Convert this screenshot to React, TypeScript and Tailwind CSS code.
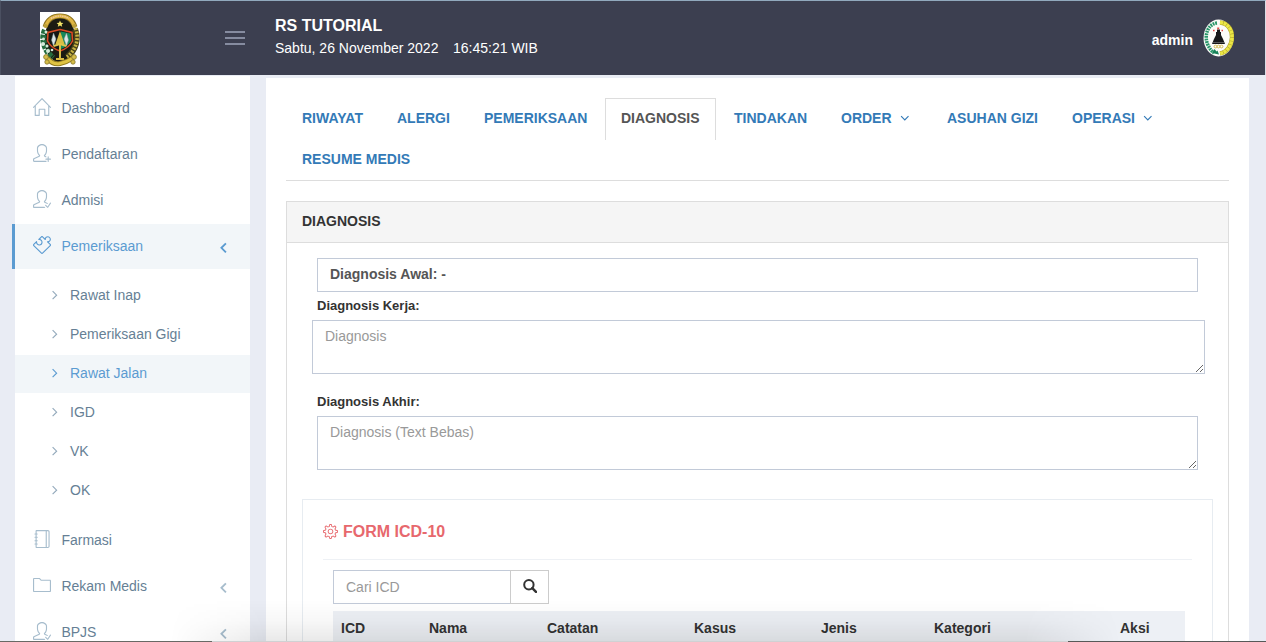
import React from "react";
import { SlHome, SlUserFollow, SlUserFollowing, SlPuzzle, SlNotebook, SlFolder, SlSettings } from "react-icons/sl";

type IconType = React.ComponentType<{ className?: string }>;

function Angle({ dir, className }: { dir: "left" | "right" | "down"; className: string }) {
  const d = {
    left: "M6.3 1.2 2.2 5.3l4.1 4.1",
    right: "M1.6 1.2 5.6 5.2 1.6 9.2",
    down: "M1.1 2.2 4.8 5.9 8.5 2.2",
  }[dir];
  return (
    <svg className={className} viewBox="0 0 10 10" fill="none" stroke="currentColor" strokeWidth={dir === "left" ? 1.7 : 1.15}>
      <path d={d} />
    </svg>
  );
}

function Crest() {
  return (
    <svg viewBox="0 0 40 55" className="h-[55px] w-10 bg-white">
      <ellipse cx="20" cy="27.500" rx="15.500" ry="23" fill="#1b1b13" />
      <path d="M5 15C8 6 14 4 20 4S32 6 35 15" fill="none" stroke="#8d7320" strokeWidth="5" />
      <path d="M5.500 14C9 5.500 14 4 20 4S31 5.500 34.500 14" fill="none" stroke="#dfb643" strokeWidth="3.400" />
      <path d="M11 6.500Q20 1.500 29 6.500" fill="none" stroke="#efc9a0" strokeWidth="1.500" strokeDasharray="1.500 .8" />
      <circle cx="5.500" cy="14" r="2" fill="#bda03a" /><circle cx="34.500" cy="14" r="2" fill="#bda03a" />
      <path d="M5 18C1 27 4 38 13 46" fill="none" stroke="#236b3e" strokeWidth="6" strokeDasharray="4 1" />
      <g fill="#d5eadb">
        <circle cx="6" cy="20" r="1.500" /><circle cx="3.500" cy="27" r="1.400" /><circle cx="3" cy="32" r="2" />
        <circle cx="7" cy="34" r="1.500" /><circle cx="8" cy="39" r="2" /><circle cx="12" cy="38" r="1.300" />
      </g>
      <path d="M35 17C39 27 36 38 27 45" fill="none" stroke="#44401a" strokeWidth="6" />
      <path d="M35.500 16C39.500 27 36 38 27 45" fill="none" stroke="#c8b343" strokeWidth="3.600" strokeDasharray="2 1.400" />
      <path d="M20 17.500 32 20.500 32.500 29Q29 36 20 39 11 36 7.500 29L8 20.500Z" fill="#141713" stroke="#d84c25" strokeWidth="1.600" />
      <path d="M21 19.500 30.500 21.500 31 29Q27 35 21 37Z" fill="#16885a" />
      <path d="m13.500 21-2 7 2 6 2.500-7Zm13 0 2 7-2 6-2.500-7Z" fill="#dbe6e7" stroke="#809499" strokeWidth=".5" />
      <path d="M20 19 24.500 32H21v14h3v2h-8v-2h3V32h-3.500Z" fill="#d9bd43" />
      <path d="m13.500 34 6.500-2 6.500 2" fill="none" stroke="#dfc54c" strokeWidth="2" />
      <path d="m20 8.500 1 2.200 2.400.2-1.800 1.600.6 2.300-2.200-1.300-2.200 1.300.6-2.300-1.800-1.600 2.400-.2Z" fill="#f5e66a" />
      <path d="M7 46Q13 53 20 51.500T33 46" fill="none" stroke="#927b20" strokeWidth="5" />
      <path d="M7 46Q13 53 20 51.500T33 46" fill="none" stroke="#dfc343" strokeWidth="3" />
      <g fill="#d5bd48" stroke="#84752d" strokeWidth=".8">
        <circle cx="6" cy="45" r="2.400" /><circle cx="34" cy="45" r="2.400" /><circle cx="7" cy="50" r="2.200" /><circle cx="33" cy="50" r="2.200" />
      </g>
    </svg>
  );
}

function Avatar() {
  return (
    <svg viewBox="0 0 31 38" className="h-[38px] w-[31px]">
      <ellipse cx="15.500" cy="19" rx="15" ry="18.500" fill="#fbfcf8" />
      <path d="M14 4C5 5 1 16 4.500 25Q7 31 11 34" fill="none" stroke="#28966a" strokeWidth="3.500" strokeDasharray="1.800 .8" />
      <path d="M17 3.500C34 5 32 32 17 34.500" fill="none" stroke="#afa32e" strokeWidth="4.400" />
      <path d="M17 3.500C34 5 32 32 17 34.500" fill="none" stroke="#ece745" strokeWidth="3.600" strokeDasharray="3 .6" />
      <path d="M13 13h5v3l2 4 2 5H9l2-5 2-4Z" fill="#171819" />
      <path d="M14 10.500h3V14h-3Z" fill="#171819" />
      <path d="M9.500 23.500h12" stroke="#858585" strokeWidth=".6" />
      <path d="M10 11.500h1.600m2.600-2.200h2m2.300 2.200H20" stroke="#e24b48" strokeWidth="1.700" />
      <g fill="none" stroke="#d7bd55" strokeWidth="1"><circle cx="12.500" cy="27.500" r="1.400" /><circle cx="15.500" cy="27.500" r="1.400" /><circle cx="18.500" cy="27.500" r="1.400" /></g>
      <path d="m9 34 2.500-4 2 2.500 1-1 1.500 4Z" fill="#18835a" />
    </svg>
  );
}

function MenuItem({ icon: Icon, label, active, arrow }: { icon: IconType; label: string; active?: boolean; arrow?: boolean }) {
  return (
    <li className={active ? "mb-px -ml-[3px] flex h-[45px] items-center border-l-[3px] border-[#5b9bd1] bg-[#f2f6f9] pb-[2px] text-[#5b9bd1]" : "mb-px flex h-[45px] items-center pb-[2px] text-[#667f95]"}>
      <Icon className={active ? "mb-px ml-[18px] size-[18px] text-[#5b9bd1]" : "mb-px ml-[18px] size-[18px] text-[#a7bdcd]"} />
      <span className="ml-[10.400px] pt-px text-[14px] leading-5">{label}</span>
      {arrow && <Angle dir="left" className={active ? "mt-[3px] mr-5 ml-auto size-[11px] text-[#5b9bd1]" : "mt-[3px] mr-5 ml-auto size-[11px] text-[#a7bdcd]"} />}
    </li>
  );
}

const subItems = [
  { label: "Rawat Inap" },
  { label: "Pemeriksaan Gigi" },
  { label: "Rawat Jalan", active: true },
  { label: "IGD" },
  { label: "VK" },
  { label: "OK" },
];

const tabs = [
  { label: "RIWAYAT", box: "w-[93px]" },
  { label: "ALERGI", box: "w-[85px]" },
  { label: "PEMERIKSAAN", box: "w-[135px]" },
  { label: "DIAGNOSIS", box: "w-[111px]", active: true },
  { label: "TINDAKAN", box: "w-[105px]" },
  { label: "ORDER", box: "w-[104px]", down: true },
  { label: "ASUHAN GIZI", box: "w-[123px]" },
  { label: "OPERASI", box: "w-[113px]", down: true },
  { label: "RESUME MEDIS", box: "w-[140px]" },
];

const columns = [
  { label: "ICD", width: "w-[88px]" },
  { label: "Nama", width: "w-[118px]" },
  { label: "Catatan", width: "w-[147px]" },
  { label: "Kasus", width: "w-[127px]" },
  { label: "Jenis", width: "w-[113px]" },
  { label: "Kategori", width: "w-[186px]" },
  { label: "Aksi", width: "w-[73px]" },
];

export default function App() {
  return (
    <div className="relative flex h-[642px] w-[1266px] flex-col overflow-hidden bg-[#e9ecf4] font-['Liberation_Sans',Arial,sans-serif] text-[14px] text-[#333]">
      <header className="flex h-[75px] shrink-0 border-t border-r border-l border-t-[#91a9bd] border-r-[#d9dce4] border-l-[#4b5061] bg-[#3c3f50] text-white">
        <div className="mt-[11px] ml-[39px] w-10"><Crest /></div>
        <div className="mt-[30px] ml-[145px] flex h-[14px] w-5 flex-col justify-between">
          <i className="h-[2px] bg-[#868ca0]" /><i className="h-[2px] bg-[#868ca0]" /><i className="h-[2px] bg-[#868ca0]" />
        </div>
        <div className="ml-[30px] pt-[14px]">
          <div className="text-[16px] leading-[22px] font-bold">RS TUTORIAL</div>
          <div className="flex leading-[23px]"><span className="w-[178px]">Sabtu, 26 November 2022</span><span>16:45:21 WIB</span></div>
        </div>
        <div className="mr-[31px] ml-auto flex h-[75px] items-center gap-[10px] pb-[2px]">
          <b className="pt-1 leading-5">admin</b><Avatar />
        </div>
      </header>

      <div className="flex h-[567px] items-start">
        <aside className="mt-px ml-[15px] h-[566px] w-[235px] shrink-0 bg-white pt-[10px]">
          <ul>
            <MenuItem icon={SlHome} label="Dashboard" />
            <MenuItem icon={SlUserFollow} label="Pendaftaran" />
            <MenuItem icon={SlUserFollowing} label="Admisi" />
            <MenuItem icon={SlPuzzle} label="Pemeriksaan" active arrow />
            <li className="py-[7px]">
              <ul>
                {subItems.map((s) => (
                  <li key={s.label} className={s.active ? "mb-px flex h-[38px] items-center bg-[#f2f6f9] pb-[2px] text-[#5b9bd1]" : "mb-px flex h-[38px] items-center pb-[2px] text-[#667f95]"}>
                    <Angle dir="right" className={s.active ? "ml-9 size-[10px]" : "ml-9 size-[10px] text-[#93a9bb]"} />
                    <span className="ml-[9px] leading-5">{s.label}</span>
                  </li>
                ))}
              </ul>
            </li>
            <MenuItem icon={SlNotebook} label="Farmasi" />
            <MenuItem icon={SlFolder} label="Rekam Medis" arrow />
            <MenuItem icon={SlUserFollowing} label="BPJS" arrow />
          </ul>
        </aside>

        <main className="mt-[3px] ml-4 h-[564px] w-[983px] bg-white px-5 pt-5">
          <nav className="flex h-[83px] flex-wrap content-start gap-x-[2px] border-b border-[#ddd] font-bold text-[#337ab7]">
            {tabs.map((t) => (
              <a key={t.label} className={"-mb-px flex h-[42px] items-center border-x border-t pb-[3px] pl-[15px] whitespace-nowrap " + t.box + (t.active ? " border-[#ddd] text-[#555]" : " border-transparent")}>
                <span>{t.label}</span>
                {t.down && <Angle dir="down" className="mt-px ml-2 size-[10px]" />}
              </a>
            ))}
          </nav>

          <section className="mt-5 h-[460px] border border-[#ddd]">
            <h3 className="flex h-[41px] items-center border-b border-[#ddd] bg-[#f5f5f5] pb-[2px] pl-[15px] font-bold">DIAGNOSIS</h3>
            <div className="pt-[15px]">
              <div className="ml-[30px] flex h-[34px] w-[881px] items-center border border-[#c2cad8] pb-[2px] pl-3 font-bold text-[#555]">Diagnosis Awal: -</div>
              <label className="mt-[5px] ml-[30px] block h-[23px] text-[13px] leading-[18px] font-bold">Diagnosis Kerja:</label>
              <textarea className="ml-[25px] block h-[54px] w-[893px] border border-[#c2cad8] px-3 py-[5px] leading-5 placeholder:text-[#999]" placeholder="Diagnosis" />
              <label className="mt-[19px] ml-[30px] block h-[23px] text-[13px] leading-[18px] font-bold">Diagnosis Akhir:</label>
              <textarea className="ml-[30px] block h-[54px] w-[881px] border border-[#c2cad8] px-3 py-[5px] leading-5 placeholder:text-[#999]" placeholder="Diagnosis (Text Bebas)" />
            </div>

            <div className="mt-[29px] ml-[15px] h-[180px] w-[911px] border border-[#e7ecf1] px-5">
              <div className="flex h-[60px] items-center border-b border-[#eef1f5] pt-[5px] text-[16px] font-bold text-[#e7686d]">
                <SlSettings className="mr-[5px] mb-[2px] size-[15px]" /><span>FORM ICD-10</span>
              </div>
              <div className="mt-[10px] ml-[10px] flex h-[34px] w-[216px]">
                <input className="w-[177px] border border-r-0 border-[#c2cad8] px-3 placeholder:text-[#999]" placeholder="Cari ICD" />
                <button className="flex w-[39px] items-center justify-center border border-[#ccc] pb-[2px]">
                  <svg viewBox="0 0 14 14" className="size-[14px]" fill="none" stroke="#333"><circle cx="5.900" cy="5.800" r="4.700" strokeWidth="2" /><path d="m9.300 9.200 3.700 3.600" strokeWidth="2.500" strokeLinecap="round" /></svg>
                </button>
              </div>
              <table className="mt-[7px] ml-[10px] w-[852px] table-fixed bg-[#edf0f5] text-left leading-5">
                <thead><tr>{columns.map((c) => <th key={c.label} className={"h-[40px] px-2 pt-[7px] align-top font-bold " + c.width}>{c.label}</th>)}</tr></thead>
              </table>
            </div>
          </section>
        </main>
      </div>

      <div className="pointer-events-none absolute bottom-0 left-[170px] h-[42px] w-[950px] bg-linear-to-t from-black/9 via-black/3 to-transparent mask-x-from-90% mask-x-to-100%" />
      <div className="absolute bottom-0 left-0 flex h-px w-full"><i className="w-[212px] bg-[#686965]" /><i className="w-[856px] bg-[#d0d1d3]" /><i className="grow bg-[#575958]" /></div>
    </div>
  );
}
